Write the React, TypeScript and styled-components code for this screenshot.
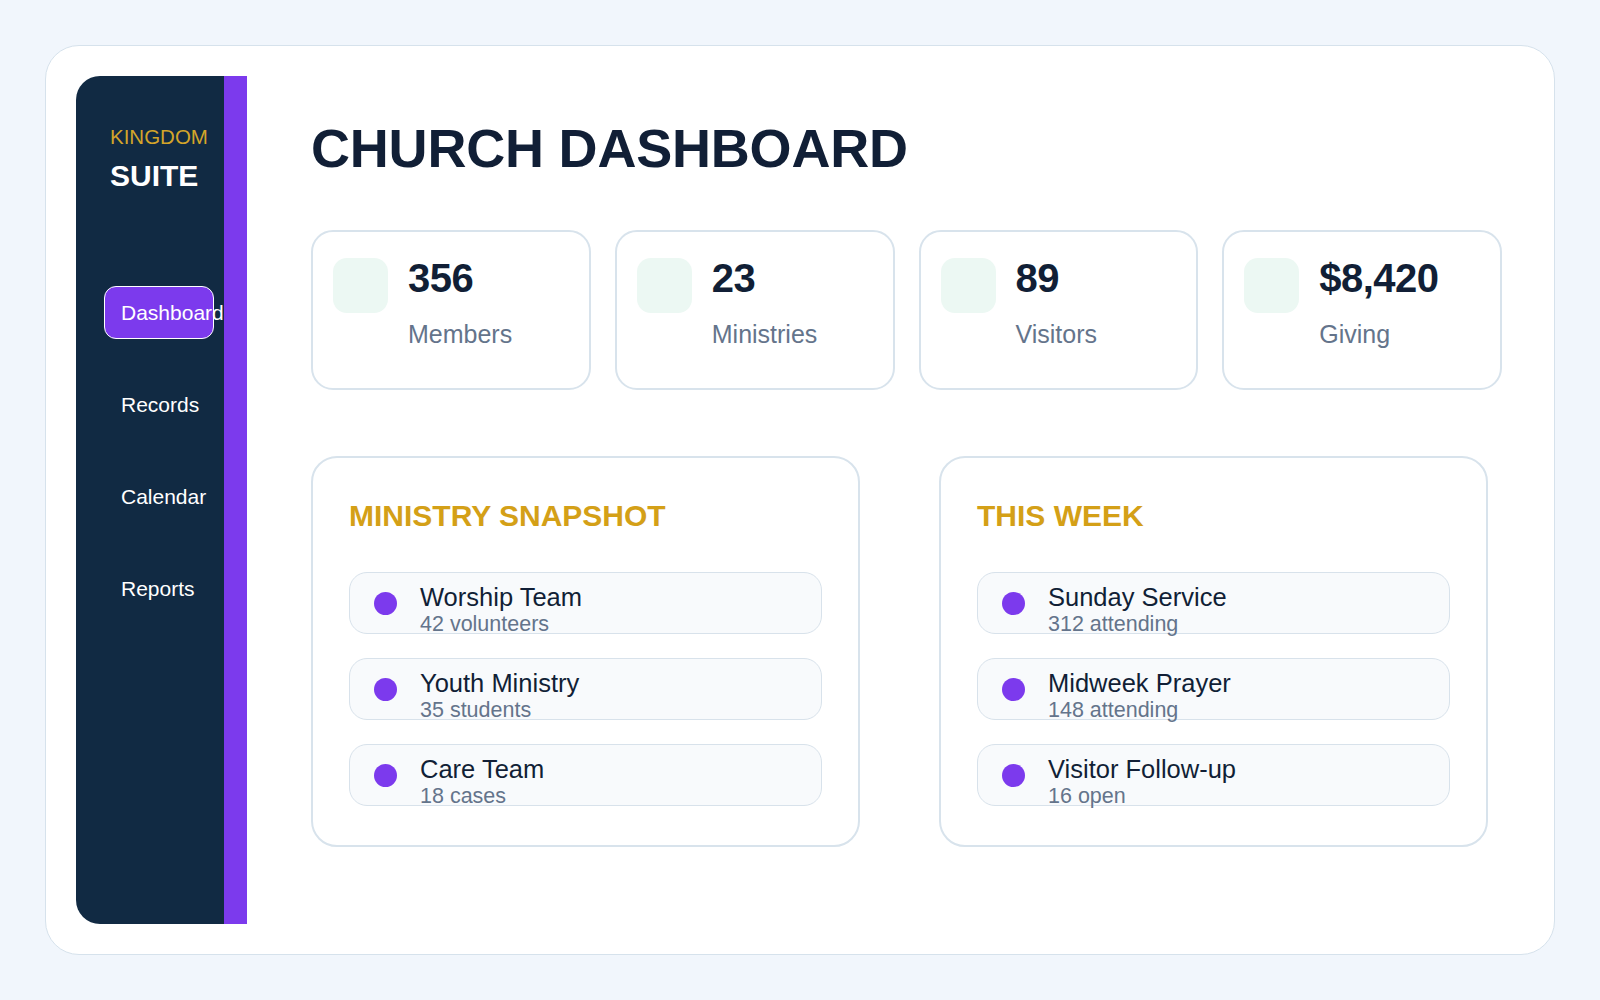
import React from 'react';
import styled, { createGlobalStyle } from 'styled-components';

const GlobalStyle = createGlobalStyle`
  html, body {
    margin: 0;
    padding: 0;
    background: #f1f6fc;
    font-family: "Liberation Sans", Arial, sans-serif;
  }
  * { box-sizing: border-box; }
`;

const Page = styled.div`
  padding: 45px;
  height: 1000px;
`;

const Shell = styled.div`
  display: flex;
  height: 910px;
  padding: 30px;
  background: #ffffff;
  border: 1px solid #d6e2ec;
  border-radius: 34px;
`;

const Sidebar = styled.aside`
  width: 171px;
  flex-shrink: 0;
  background: #112a43;
  border-right: 23px solid #7c3aed;
  border-radius: 24px 0 0 24px;
  padding: 49px 0 0 28px;
  overflow: hidden;
`;

const Brand = styled.div`
  padding-left: 6px;
`;

const BrandTop = styled.div`
  font-size: 20.5px;
  color: #d4a52a;
  line-height: 23px;
`;

const BrandName = styled.div`
  margin-top: 10px;
  font-size: 30px;
  font-weight: 700;
  color: #ffffff;
  line-height: 35px;
`;

const Nav = styled.nav`
  display: flex;
  flex-direction: column;
  gap: 39px;
  margin-top: 93px;
`;

const NavItem = styled.div<{ $active?: boolean }>`
  width: 110px;
  padding: 14px 16px;
  font-size: 21px;
  line-height: 23px;
  color: #ffffff;
  white-space: nowrap;
  border-radius: 12px;
  border: 1px solid ${(p) => (p.$active ? '#ffffff' : 'transparent')};
  background: ${(p) => (p.$active ? '#7c3aed' : 'transparent')};
`;

const Main = styled.main`
  flex: 1;
  padding: 41px 22px 0 64px;
`;

const Title = styled.h1`
  margin: 0 0 51px;
  font-size: 54px;
  line-height: 62px;
  font-weight: 700;
  letter-spacing: -0.2px;
  color: #111f36;
`;

const StatGrid = styled.div`
  display: grid;
  grid-template-columns: repeat(4, 1fr);
  gap: 24px;
`;

const StatCard = styled.div`
  display: flex;
  gap: 20px;
  height: 160px;
  padding: 26px 20px;
  border: 2px solid #d8e3ec;
  border-radius: 22px;
`;

const StatIcon = styled.div`
  width: 55px;
  height: 55px;
  flex-shrink: 0;
  border-radius: 14px;
  background: #ecf8f3;
`;

const StatBody = styled.div`
  display: flex;
  flex-direction: column;
`;

const StatValue = styled.div`
  font-size: 40px;
  line-height: 40px;
  font-weight: 700;
  color: #111f36;
  letter-spacing: -0.5px;
`;

const StatLabel = styled.div`
  margin-top: 22px;
  font-size: 25px;
  line-height: 28px;
  color: #64748b;
`;

const PanelGrid = styled.div`
  display: grid;
  grid-template-columns: 549px 549px;
  column-gap: 79px;
  margin-top: 66px;
`;

const Panel = styled.section`
  height: 391px;
  padding: 40px 36px 0;
  border: 2px solid #d8e3ec;
  border-radius: 26px;
`;

const PanelTitle = styled.h2`
  margin: 0 0 39px;
  font-size: 30px;
  line-height: 35px;
  font-weight: 700;
  color: #d4a017;
`;

const List = styled.div`
  display: flex;
  flex-direction: column;
  gap: 24px;
`;

const Item = styled.div`
  display: flex;
  align-items: center;
  gap: 23px;
  height: 62px;
  padding: 0 24px;
  background: #f8fafc;
  border: 1px solid #d8e2eb;
  border-radius: 18px;
`;

const Dot = styled.span`
  width: 23px;
  height: 23px;
  flex-shrink: 0;
  border-radius: 50%;
  background: #7c3aed;
`;

const ItemText = styled.div`
  align-self: flex-start;
  padding-top: 10px;
`;

const ItemName = styled.div`
  font-size: 25.5px;
  line-height: 29px;
  color: #111f36;
`;

const ItemSub = styled.div`
  font-size: 21.5px;
  line-height: 24px;
  color: #64748b;
`;

const stats = [
  { value: '356', label: 'Members' },
  { value: '23', label: 'Ministries' },
  { value: '89', label: 'Visitors' },
  { value: '$8,420', label: 'Giving' },
];

const panels = [
  {
    title: 'MINISTRY SNAPSHOT',
    items: [
      { name: 'Worship Team', sub: '42 volunteers' },
      { name: 'Youth Ministry', sub: '35 students' },
      { name: 'Care Team', sub: '18 cases' },
    ],
  },
  {
    title: 'THIS WEEK',
    items: [
      { name: 'Sunday Service', sub: '312 attending' },
      { name: 'Midweek Prayer', sub: '148 attending' },
      { name: 'Visitor Follow-up', sub: '16 open' },
    ],
  },
];

const navItems = ['Dashboard', 'Records', 'Calendar', 'Reports'];

export default function App() {
  return (
    <>
      <GlobalStyle />
      <Page>
        <Shell>
          <Sidebar>
            <Brand>
              <BrandTop>KINGDOM</BrandTop>
              <BrandName>SUITE</BrandName>
            </Brand>
            <Nav>
              {navItems.map((item, i) => (
                <NavItem key={item} $active={i === 0}>
                  {item}
                </NavItem>
              ))}
            </Nav>
          </Sidebar>
          <Main>
            <Title>CHURCH DASHBOARD</Title>
            <StatGrid>
              {stats.map((s) => (
                <StatCard key={s.label}>
                  <StatIcon />
                  <StatBody>
                    <StatValue>{s.value}</StatValue>
                    <StatLabel>{s.label}</StatLabel>
                  </StatBody>
                </StatCard>
              ))}
            </StatGrid>
            <PanelGrid>
              {panels.map((p) => (
                <Panel key={p.title}>
                  <PanelTitle>{p.title}</PanelTitle>
                  <List>
                    {p.items.map((it) => (
                      <Item key={it.name}>
                        <Dot />
                        <ItemText>
                          <ItemName>{it.name}</ItemName>
                          <ItemSub>{it.sub}</ItemSub>
                        </ItemText>
                      </Item>
                    ))}
                  </List>
                </Panel>
              ))}
            </PanelGrid>
          </Main>
        </Shell>
      </Page>
    </>
  );
}
